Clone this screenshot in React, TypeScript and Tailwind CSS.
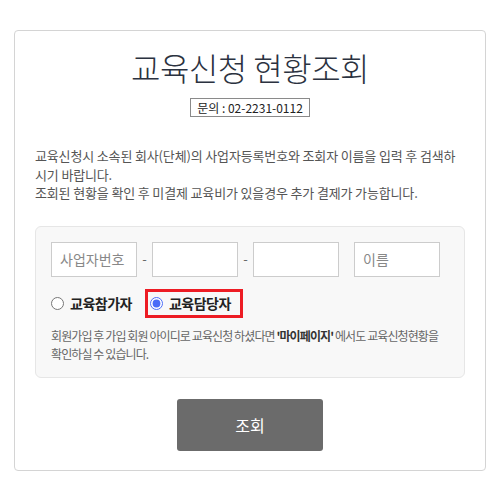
export default function App() {
  const kr = { fontFamily: '"Noto Sans CJK KR", "Noto Sans", sans-serif' }
  return (
    <div className="min-h-screen bg-white pt-[30px] pl-[14px]" style={kr}>
      <div className="w-[472px] rounded-[4px] border border-[#d4d4d4] px-[20px] pt-[16px] pb-[19px]">
        {/* Title */}
        <h1 className="text-center text-[32px] leading-[40px] font-light text-[#2b3240] tracking-[-0.5px]">
          교육신청 현황조회
        </h1>
        <div className="mt-[11px] flex justify-center">
          <span className="border border-[#8a8a8a] bg-white px-[6px] text-[12px] leading-[17px] text-[#222]">
            문의 : 02-2231-0112
          </span>
        </div>

        {/* Guide text */}
        <p className="mt-[30px] text-[13px] leading-[18.5px] text-[#555] tracking-[-0.15px]">
          교육신청시 소속된 회사(단체)의 사업자등록번호와 조회자 이름을 입력 후 검색하시기 바랍니다.
          <br />
          조회된 현황을 확인 후 미결제 교육비가 있을경우 추가 결제가 가능합니다.
        </p>

        {/* Search box */}
        <div className="mt-[23px] rounded-[6px] border border-[#e6e6e6] bg-[#f8f8f8] px-[15px] pt-[15px] pb-[14px]">
          <div className="flex items-center">
            <input
              className="h-[35px] w-[86px] border border-[#cccccc] bg-white px-[8px] text-[14px] outline-none placeholder:text-[#888]"
              placeholder="사업자번호"
            />
            <span className="w-[15px] text-center text-[13px] text-[#666]">-</span>
            <input className="h-[35px] w-[86px] border border-[#cccccc] bg-white px-[8px] text-[14px] outline-none" />
            <span className="w-[15px] text-center text-[13px] text-[#666]">-</span>
            <input className="h-[35px] w-[86px] border border-[#cccccc] bg-white px-[8px] text-[14px] outline-none" />
            <span className="w-[15px]" />
            <input
              className="h-[35px] w-[86px] border border-[#cccccc] bg-white px-[8px] text-[14px] outline-none placeholder:text-[#888]"
              placeholder="이름"
            />
          </div>

          <div className="mt-[12px] flex items-center">
            <label className="flex items-center gap-[6px] text-[14px] font-bold text-[#222] tracking-[-0.5px]">
              <input type="radio" name="role" className="m-0 h-[13px] w-[13px]" />
              교육참가자
            </label>
            <label className="ml-[13px] flex h-[29px] items-center gap-[6px] border-[3px] border-[#ed1c24] px-[2px] pr-[9px] text-[14px] font-bold text-[#222] tracking-[-0.5px]">
              <input type="radio" name="role" defaultChecked className="m-0 h-[13px] w-[13px] accent-[#4a6cf7]" />
              교육담당자
            </label>
          </div>

          <p className="mt-[9px] text-[12px] leading-[18px] text-[#666] tracking-[-0.9px]">
            회원가입 후 가입 회원 아이디로 교육신청 하셨다면 <b className="text-[#333]">'마이페이지'</b> 에서도 교육신청현황을
            확인하실 수 있습니다.
          </p>
        </div>

        <div className="mt-[21px] flex justify-center">
          <button className="h-[52px] w-[146px] rounded-[3px] bg-[#6b6b6b] text-[16px] text-white">조회</button>
        </div>
      </div>
    </div>
  )
}
